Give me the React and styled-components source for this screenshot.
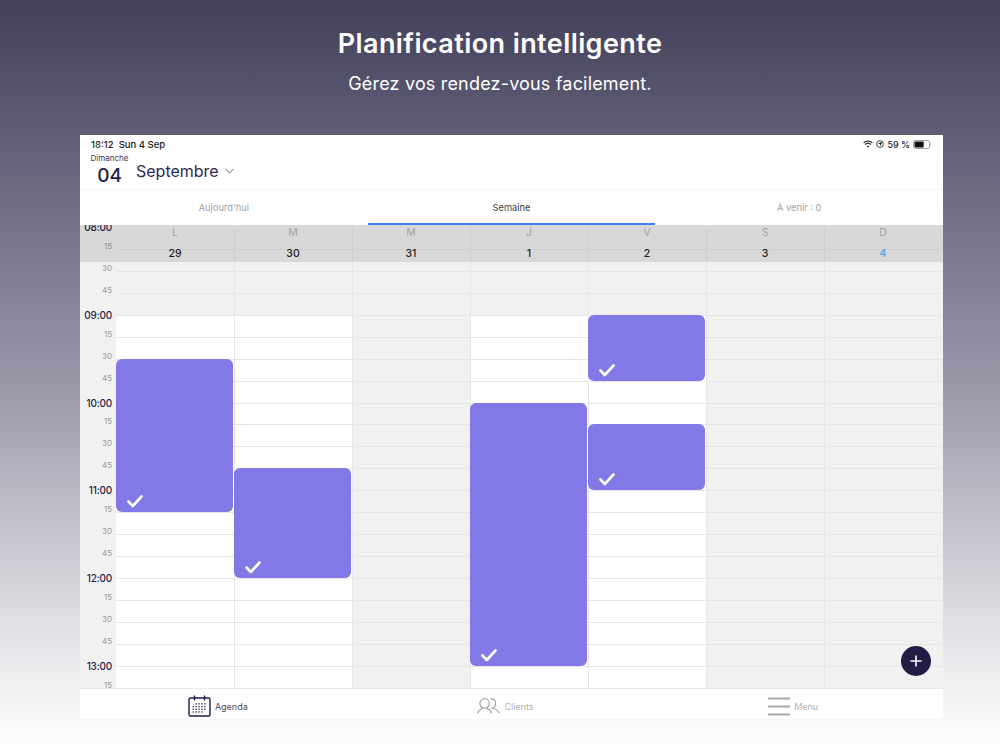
import React from 'react'
import styled, { createGlobalStyle } from 'styled-components'

const ROW = 21.94

const days = [
  { letter: 'L', num: '29', open: true, events: [{ start: 6, span: 7 }] },
  { letter: 'M', num: '30', open: true, events: [{ start: 11, span: 5 }] },
  { letter: 'M', num: '31', open: false, events: [] },
  { letter: 'J', num: '1', open: true, events: [{ start: 8, span: 12 }] },
  { letter: 'V', num: '2', open: true, events: [{ start: 4, span: 3 }, { start: 9, span: 3 }] },
  { letter: 'S', num: '3', open: false, events: [] },
  { letter: 'D', num: '4', open: false, today: true, events: [] },
]

// one row per quarter hour, from 08:00 to 13:15
const times = []
for (let h = 8; h <= 13; h++) {
  ;['00', '15', '30', '45'].forEach(m => {
    if (h === 13 && m > '15') return
    times.push(m === '00' ? `${String(h).padStart(2, '0')}:00` : m)
  })
}

function Check() {
  return (
    <svg width="16" height="13" viewBox="0 0 16 13" fill="none">
      <path d="M1.5 6.5 L5.8 11 L14.5 1.5" stroke="#fff" strokeWidth="2.6" strokeLinecap="round" strokeLinejoin="round" />
    </svg>
  )
}

function CalendarIcon() {
  const dots = []
  for (let r = 0; r < 4; r++) {
    for (let c = 0; c < 5; c++) {
      if ((r === 0 && c === 0) || (r === 3 && c === 4)) continue
      dots.push(<rect key={r + '-' + c} x={4.6 + c * 2.9} y={8.2 + r * 2.7} width="1.3" height="1.3" fill="#221c46" />)
    }
  }
  return (
    <svg width="23" height="22" viewBox="0 0 23 22" fill="none">
      <rect x="1" y="3" width="21" height="18" rx="1.5" stroke="#221c46" strokeWidth="1.4" />
      <path d="M6.5 0.5 V5.5 M16.5 0.5 V5.5" stroke="#221c46" strokeWidth="1.4" />
      {dots}
    </svg>
  )
}

function UsersIcon() {
  return (
    <svg width="23" height="16" viewBox="0 0 23 16" fill="none" stroke="#a3a3a3" strokeWidth="1.2">
      <circle cx="7.6" cy="5.4" r="4.7" />
      <path d="M0.6 15.4 C1.4 12.4 3.4 11 5.4 10.2 M9.8 10.2 C11.8 11 13.8 12.4 14.6 15.4" />
      <path d="M13.4 0.9 C16.2 0.4 18.6 2.4 18.6 5.2 C18.6 7.6 17.2 9.4 15.4 10 C18.4 10.8 21 12.4 22.2 15.2" />
    </svg>
  )
}

function MenuIcon() {
  return (
    <svg width="22" height="19" viewBox="0 0 22 19" fill="none" stroke="#a8a8a8" strokeWidth="2">
      <path d="M0 1.5 H22 M0 9.5 H22 M0 17.5 H22" />
    </svg>
  )
}

function Wifi() {
  return (
    <svg width="10" height="8" viewBox="0 0 10 8" fill="none" stroke="#1c1c1c" strokeWidth="1.2">
      <path d="M0.6 2.8 C3 0.4 7 0.4 9.4 2.8" />
      <path d="M2.2 4.5 C3.8 3 6.2 3 7.8 4.5" />
      <path d="M5 7.6 L3.7 6.2 C4.4 5.6 5.6 5.6 6.3 6.2 Z" fill="#1c1c1c" stroke="none" />
    </svg>
  )
}

function Lock() {
  return (
    <svg width="8" height="8" viewBox="0 0 8 8" fill="none">
      <circle cx="4" cy="4" r="3.4" stroke="#1c1c1c" strokeWidth="0.8" />
      <path d="M1.8 3.6 L6.2 1.8 L4.4 6.2 L4 4 Z" fill="#1c1c1c" />
    </svg>
  )
}

function Battery() {
  return (
    <svg width="19" height="9" viewBox="0 0 19 9" fill="none">
      <rect x="0.5" y="0.5" width="16" height="8" rx="2" stroke="#8a8a8a" strokeWidth="0.8" />
      <rect x="1.5" y="1.5" width="9.2" height="6" rx="1" fill="#111" />
      <path d="M17.6 3 C18.4 3.3 18.4 5.7 17.6 6 Z" fill="#8a8a8a" />
    </svg>
  )
}

function App() {
  return (
    <Page>
      <Global />
      <Hero>
        <Title>Planification intelligente</Title>
        <Subtitle>Gérez vos rendez-vous facilement.</Subtitle>
      </Hero>

      <Panel>
        <StatusBar>
          <span>18:12&nbsp;&nbsp;Sun 4 Sep</span>
          <StatusRight>
            <Wifi />
            <Lock />
            <span>59 %</span>
            <Battery />
          </StatusRight>
        </StatusBar>

        <Header>
          <DateBlock>
            <DayName>Dimanche</DayName>
            <DayNum>04</DayNum>
          </DateBlock>
          <Month>Septembre</Month>
          <svg width="9" height="6" viewBox="0 0 10 6" fill="none" stroke="#4a4763" strokeWidth="1">
            <path d="M0.5 0.7 L5 5.2 L9.5 0.7" />
          </svg>
        </Header>

        <Tabs>
          <Tab>Aujourd'hui</Tab>
          <Tab $active>Semaine</Tab>
          <Tab>À venir : 0</Tab>
        </Tabs>

        <Calendar>
          <Gutter>
            {times.map((t, i) => (
              <TimeSlot key={i}>
                <TimeLabel $hour={t.length > 2}>{t}</TimeLabel>
              </TimeSlot>
            ))}
          </Gutter>

          {days.map((d, i) => (
            <DayColumn key={i}>
              {times.map((t, j) => (
                <Slot key={j} $open={d.open && j >= 4} $first={i === 0} $top={j === 0} />
              ))}
              {d.events.map((e, j) => (
                <Event key={j} $start={e.start} $span={e.span}>
                  <Check />
                </Event>
              ))}
            </DayColumn>
          ))}

          <WeekHead>
            <span />
            {days.map((d, i) => (
              <WeekDay key={i}>
                <DayLetter>{d.letter}</DayLetter>
                <DayDate $today={d.today}>{d.num}</DayDate>
              </WeekDay>
            ))}
          </WeekHead>

          <Fab>
            <svg width="12" height="12" viewBox="0 0 12 12" stroke="#fff" strokeWidth="1.6">
              <path d="M6 0.5 V11.5 M0.5 6 H11.5" />
            </svg>
          </Fab>
        </Calendar>

        <Footer>
          <NavItem $active>
            <CalendarIcon />
            <span>Agenda</span>
          </NavItem>
          <NavItem>
            <UsersIcon />
            <span>Clients</span>
          </NavItem>
          <NavItem>
            <MenuIcon />
            <span>Menu</span>
          </NavItem>
        </Footer>
      </Panel>
    </Page>
  )
}

const Global = createGlobalStyle`
  html, body {
    margin: 0;
    padding: 0;
    height: 750px;
    overflow: hidden;
    font-family: Inter, "Liberation Sans", sans-serif;
  }
`

const Page = styled.div`
  width: 1000px;
  height: 750px;
  display: flex;
  flex-direction: column;
  align-items: center;
  background: linear-gradient(180deg, #42405a 0%, #9795a6 50%, #e4e4e8 85%, #ffffff 100%);
`

const Hero = styled.header`
  height: 135px;
  display: flex;
  flex-direction: column;
  align-items: center;
  color: #fff;
`

const Title = styled.h1`
  margin: 25px 0 0;
  font-size: 27px;
  line-height: 38px;
  font-weight: 600;
  letter-spacing: 0.42px;
`

const Subtitle = styled.p`
  margin: 8px 0 0;
  font-size: 18px;
  line-height: 26px;
  font-weight: 400;
  letter-spacing: 0.18px;
`

const Panel = styled.section`
  align-self: flex-start;
  margin-left: 80px;
  width: 863px;
  height: 584px;
  display: flex;
  flex-direction: column;
  background: #fff;
`

const StatusBar = styled.div`
  height: 17px;
  flex: none;
  padding: 1px 11px 0 11px;
  box-sizing: border-box;
  display: flex;
  align-items: center;
  justify-content: space-between;
  font-size: 9.5px;
  font-weight: 500;
  color: #1c1c1c;
`

const StatusRight = styled.div`
  display: flex;
  align-items: center;
  gap: 3px;
  font-size: 9px;
`

const Header = styled.div`
  height: 38px;
  flex: none;
  box-sizing: border-box;
  padding-left: 10px;
  display: flex;
  align-items: center;
  border-bottom: 1px solid #f6f6f6;
  svg {
    margin: 0 0 0 6px;
  }
`

const DateBlock = styled.div`
  width: 39px;
  display: flex;
  flex-direction: column;
  align-items: center;
`

const DayName = styled.span`
  font-size: 8px;
  line-height: 10px;
  color: #3a3655;
`

const DayNum = styled.span`
  font-size: 19px;
  line-height: 26px;
  font-weight: 500;
  color: #221c46;
`

const Month = styled.span`
  margin-left: 7px;
  font-size: 16px;
  color: #2f2a52;
`

const Tabs = styled.nav`
  height: 35px;
  flex: none;
  display: grid;
  grid-template-columns: repeat(3, 1fr);
`

const Tab = styled.div`
  display: flex;
  align-items: center;
  justify-content: center;
  padding-top: 2px;
  font-size: 9.3px;
  color: ${p => (p.$active ? '#3f3f46' : '#a3a3a3')};
  border-bottom: 2px solid ${p => (p.$active ? '#3b82f6' : 'transparent')};
`

const Calendar = styled.div`
  flex: 1;
  min-height: 0;
  padding-top: 2px;
  box-sizing: border-box;
  display: flex;
  position: relative;
  overflow: hidden;
  background: #f1f1f1;
`

const Gutter = styled.div`
  width: 36px;
  flex: none;
`

const TimeSlot = styled.div`
  height: ${ROW}px;
  padding-right: 4px;
  box-sizing: border-box;
  text-align: right;
`

const TimeLabel = styled.span`
  display: block;
  line-height: 12px;
  font-size: ${p => (p.$hour ? '10px' : '8px')};
  font-weight: ${p => (p.$hour ? 500 : 400)};
  letter-spacing: ${p => (p.$hour ? '-0.2px' : '0')};
  color: ${p => (p.$hour ? '#2a2548' : '#9a9a9a')};
  transform: translateY(${p => (p.$hour ? '-6px' : '-9px')});
`

const DayColumn = styled.div`
  width: 118px;
  flex: none;
  position: relative;
`

const Slot = styled.div`
  height: ${ROW}px;
  box-sizing: border-box;
  border-top: 1px solid ${p => (p.$top ? 'transparent' : '#e6e6e6')};
  border-left: ${p => (p.$first ? 'none' : '1px solid #e6e6e6')};
  background: ${p => (p.$open ? '#fff' : '#f1f1f1')};
`

const Event = styled.div`
  position: absolute;
  left: 0;
  width: 116.5px;
  top: ${p => p.$start * ROW}px;
  height: ${p => p.$span * ROW}px;
  box-sizing: border-box;
  padding: 0 0 4px 11px;
  display: flex;
  align-items: flex-end;
  background: #8278e6;
  border-radius: 6px;
`

const WeekHead = styled.div`
  position: absolute;
  top: 0;
  left: 0;
  right: 0;
  height: 37px;
  display: grid;
  grid-template-columns: 36px repeat(7, 118px);
  background: rgba(0, 0, 0, 0.1);
`

const WeekDay = styled.div`
  display: flex;
  flex-direction: column;
  align-items: center;
`

const DayLetter = styled.span`
  margin-top: 1px;
  font-size: 10.5px;
  line-height: 14px;
  color: #a5a5a5;
`

const DayDate = styled.span`
  margin-top: 7px;
  font-size: 10.5px;
  line-height: 14px;
  font-weight: 500;
  color: ${p => (p.$today ? '#4aa3ea' : '#1c1c1c')};
`

const Fab = styled.div`
  position: absolute;
  right: 12px;
  bottom: 12px;
  width: 30px;
  height: 30px;
  border-radius: 50%;
  background: #221c46;
  display: flex;
  align-items: center;
  justify-content: center;
`

const Footer = styled.footer`
  height: 31px;
  flex: none;
  display: grid;
  grid-template-columns: repeat(3, 1fr);
  background: #fff;
  border-top: 1px solid #e8e8e8;
  box-sizing: border-box;
`

const NavItem = styled.div`
  display: flex;
  align-items: center;
  justify-content: center;
  gap: 4px;
  padding: 4px 12px 0 0;
  font-size: 9px;
  color: ${p => (p.$active ? '#4a4763' : '#b0b0b0')};
`

export default App
